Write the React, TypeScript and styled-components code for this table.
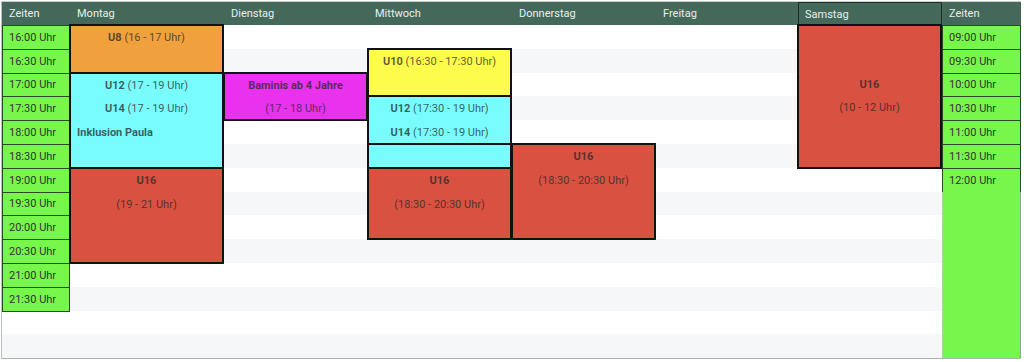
import React from "react"
import styled, { createGlobalStyle } from "styled-components"

const GlobalStyle = createGlobalStyle`
    html, body {
        margin: 0;
        padding: 0;
        background: #ffffff;
        font-family: Roboto, "Liberation Sans", sans-serif;
    }
`

const Page = styled.div`
    padding: 1px 0 0 2px;
    width: 1024px;
    height: 362px;
    box-sizing: border-box;
`

const Grid = styled.div`
    display: grid;
    grid-template-columns: 68px 154px 144px 144px 144px 142px 144px 79px;
    grid-template-rows: 23px repeat(14, 23.8px);
    width: 1019px;
    border-top: 1px solid #c9d0cc;
    border-left: 1px solid #b9c2bd;
    border-bottom: 1px solid #aab3ae;
    box-sizing: content-box;
    margin-left: -1px;
`

const HeadCell = styled.div<{ $col: number; $boxed?: boolean }>`
    grid-row: 1;
    grid-column: ${p => p.$col};
    background: #44695a;
    color: #e8efea;
    font-size: 11px;
    display: flex;
    align-items: center;
    padding-left: ${p => (p.$boxed ? 6 : 7)}px;
    box-sizing: border-box;
    border: ${p => (p.$boxed ? "1px solid #1f2f28" : "none")};
    border-bottom: none;
`

const Stripe = styled.div<{ $row: number }>`
    grid-row: ${p => p.$row};
    grid-column: 1 / -1;
    background: ${p => (p.$row % 2 === 0 ? "#ffffff" : "#f6f7f9")};
`

const TimeCell = styled.div<{ $row: number; $col: number }>`
    grid-row: ${p => p.$row};
    grid-column: ${p => p.$col};
    background: #77f74b;
    border: 1px solid #2a4a22;
    margin: 0 0 -1px 0;
    box-sizing: border-box;
    color: #333333;
    font-size: 11px;
    display: flex;
    align-items: center;
    padding-left: 6px;
`

const Filler = styled.div<{ $from: number; $to: number; $col: number }>`
    grid-row: ${p => p.$from} / ${p => p.$to};
    grid-column: ${p => p.$col};
    background: #77f74b;
    border-left: 1px solid #a6d896;
    border-right: 1px solid #8fa88a;
`

const Block = styled.div<{ $col: number; $row: number; $span: number; $bg: string; $center?: boolean }>`
    grid-column: ${p => p.$col};
    grid-row: ${p => p.$row} / span ${p => p.$span};
    background: ${p => p.$bg};
    border: 2px solid #111111;
    margin: -1px 0 -1px -1px;
    box-sizing: border-box;
    display: flex;
    flex-direction: column;
    justify-content: ${p => (p.$center ? "center" : "flex-start")};
    color: rgba(40, 40, 40, 0.75);
    font-size: 11px;
    overflow: hidden;
`

const Line = styled.div<{ $left?: boolean }>`
    height: 23.8px;
    line-height: 24px;
    text-align: ${p => (p.$left ? "left" : "center")};
    padding-left: ${p => (p.$left ? 6 : 0)}px;
    white-space: nowrap;
`

const Strong = styled.b`
    font-weight: 700;
`

const days = ["Montag", "Dienstag", "Mittwoch", "Donnerstag", "Freitag", "Samstag"]
const leftTimes = ["16:00", "16:30", "17:00", "17:30", "18:00", "18:30", "19:00", "19:30", "20:00", "20:30", "21:00", "21:30"]
const rightTimes = ["09:00", "09:30", "10:00", "10:30", "11:00", "11:30", "12:00"]

const colors = {
    orange: "#f0a03c",
    cyan: "#78fcfd",
    red: "#d85141",
    magenta: "#e932ee",
    yellow: "#fdfb4b",
}

type LineData = { bold?: string; text?: string; left?: boolean }
type BlockData = { col: number; start: number; span: number; bg: string; lines: LineData[]; center?: boolean }

const blocks: BlockData[] = [
    { col: 2, start: 0, span: 2, bg: colors.orange, lines: [{ bold: "U8", text: " (16 - 17 Uhr)" }] },
    {
        col: 2, start: 2, span: 4, bg: colors.cyan, lines: [
            { bold: "U12", text: " (17 - 19 Uhr)" },
            { bold: "U14", text: " (17 - 19 Uhr)" },
            { bold: "Inklusion Paula", left: true },
        ]
    },
    { col: 2, start: 6, span: 4, bg: colors.red, lines: [{ bold: "U16" }, { text: "(19 - 21 Uhr)" }] },
    { col: 3, start: 2, span: 2, bg: colors.magenta, lines: [{ bold: "Baminis ab 4 Jahre" }, { text: "(17 - 18 Uhr)" }] },
    { col: 4, start: 1, span: 2, bg: colors.yellow, lines: [{ bold: "U10", text: " (16:30 - 17:30 Uhr)" }] },
    {
        col: 4, start: 3, span: 2, bg: colors.cyan, lines: [
            { bold: "U12", text: " (17:30 - 19 Uhr)" },
            { bold: "U14", text: " (17:30 - 19 Uhr)" },
        ]
    },
    { col: 4, start: 5, span: 1, bg: colors.cyan, lines: [] },
    { col: 4, start: 6, span: 3, bg: colors.red, lines: [{ bold: "U16" }, { text: "(18:30 - 20:30 Uhr)" }] },
    { col: 5, start: 5, span: 4, bg: colors.red, lines: [{ bold: "U16" }, { text: "(18:30 - 20:30 Uhr)" }] },
    { col: 7, start: 0, span: 6, bg: colors.red, center: true, lines: [{ bold: "U16" }, { text: "(10 - 12 Uhr)" }] },
]

const ROWS = 14

export default function App() {
    return (
        <Page>
            <GlobalStyle />
            <Grid>
                <HeadCell $col={1}>Zeiten</HeadCell>
                {days.map((d, i) => (
                    <HeadCell key={d} $col={i + 2} $boxed={d === "Samstag"}>{d}</HeadCell>
                ))}
                <HeadCell $col={8}>Zeiten</HeadCell>

                {Array.from({ length: ROWS }).map((_, i) => (
                    <Stripe key={i} $row={i + 2} />
                ))}

                {leftTimes.map((t, i) => (
                    <TimeCell key={"l" + t} $row={i + 2} $col={1}>{t} Uhr</TimeCell>
                ))}
                {rightTimes.map((t, i) => (
                    <TimeCell key={"r" + t} $row={i + 2} $col={8}>{t} Uhr</TimeCell>
                ))}
                <Filler $from={rightTimes.length + 2} $to={ROWS + 2} $col={8} />

                {blocks.map((b, i) => (
                    <Block key={i} $col={b.col} $row={b.start + 2} $span={b.span} $bg={b.bg} $center={b.center}>
                        {b.lines.map((l, j) => (
                            <Line key={j} $left={l.left}>
                                {l.bold && <Strong>{l.bold}</Strong>}
                                {l.text}
                            </Line>
                        ))}
                    </Block>
                ))}
            </Grid>
        </Page>
    )
}
